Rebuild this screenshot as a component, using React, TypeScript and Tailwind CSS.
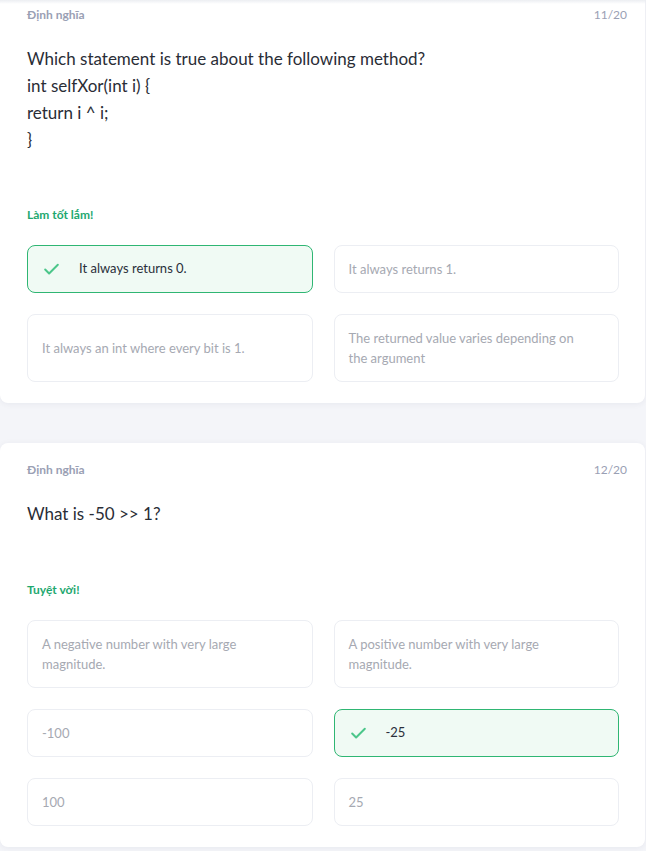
import { Check } from 'lucide-react';

type Opt = { text: string; correct?: boolean };

const q1: Opt[][] = [
  [{ text: 'It always returns 0.', correct: true }, { text: 'It always returns 1.' }],
  [{ text: 'It always an int where every bit is 1.' }, { text: 'The returned value varies depending on the argument' }],
];

const q2: Opt[][] = [
  [{ text: 'A negative number with very large magnitude.' }, { text: 'A positive number with very large magnitude.' }],
  [{ text: '-100' }, { text: '-25', correct: true }],
  [{ text: '100' }, { text: '25' }],
];

function Option({ o, tall }: { o: Opt; tall: boolean }) {
  if (o.correct) {
    return (
      <div className={`flex items-center rounded-lg border border-[#2fb673] bg-[#f0faf4] pl-[14px] pr-4 ${tall ? 'h-[68px]' : 'h-[48px]'}`}>
        <Check className="w-[19px] h-[19px] text-[#4cc68a]" strokeWidth={2.5} />
        <span className="ml-[18px] text-[13px] text-[#2a2f3a]">{o.text}</span>
      </div>
    );
  }
  return (
    <div className={`flex items-center rounded-lg border border-[#eceef3] bg-white pl-[14px] pr-[40px] ${tall ? 'h-[68px]' : 'h-[48px]'}`}>
      <span className="text-[13px] leading-[20px] text-[#a6a9b2]">{o.text}</span>
    </div>
  );
}

function Card({ num, lines, praise, rows, gapTop }: { num: string; lines: string[]; praise: string; rows: Opt[][]; gapTop: string }) {
  return (
    <div className="w-[645px] rounded-lg bg-white shadow-[0_1px_6px_rgba(20,30,60,0.06)] pl-[27px] pr-[26px] pt-[14px] pb-[21px]">
      <div className="flex items-center justify-between h-[26px]">
        <span className="text-[12px] font-bold text-[#9aa0b4]">Định nghĩa</span>
        <span className="text-[12px] text-[#9aa0b4] mr-[-8px]">{num}</span>
      </div>
      <div className="mt-[17px] text-[17px] leading-[27px] text-[#2a2d36]">
        {lines.map((l) => (
          <div key={l}>{l}</div>
        ))}
      </div>
      <div className={`${gapTop} text-[12px] leading-[18px] font-bold text-[#1ea86f]`}>{praise}</div>
      <div className="mt-[21px] flex flex-col gap-[21px]">
        {rows.map((r, i) => {
          const tall = r.some((o) => o.text.length > 40);
          return (
            <div key={i} className="grid grid-cols-2 gap-[21px]">
              {r.map((o) => (
                <Option key={o.text} o={o} tall={tall} />
              ))}
            </div>
          );
        })}
      </div>
    </div>
  );
}

export default function App() {
  return (
    <div className="relative min-h-[851px] bg-[#f4f5f9] overflow-hidden" style={{ fontFamily: 'Lato, "Open Sans", sans-serif' }}>
      <div className="absolute top-0 left-0 right-0 h-[4px] bg-gradient-to-b from-[#eceef2] to-transparent" />
      <div className="-mt-[12px]">
        <Card
          num="11/20"
          lines={['Which statement is true about the following method?', 'int selfXor(int i) {', 'return i ^ i;', '}']}
          praise="Làm tốt lắm!"
          rows={q1}
          gapTop="mt-[53px]"
        />
      </div>
      <div className="h-[40px]" />
      <Card num="12/20" lines={['What is -50 >> 1?']} praise="Tuyệt vời!" rows={q2} gapTop="mt-[54px]" />
    </div>
  );
}
